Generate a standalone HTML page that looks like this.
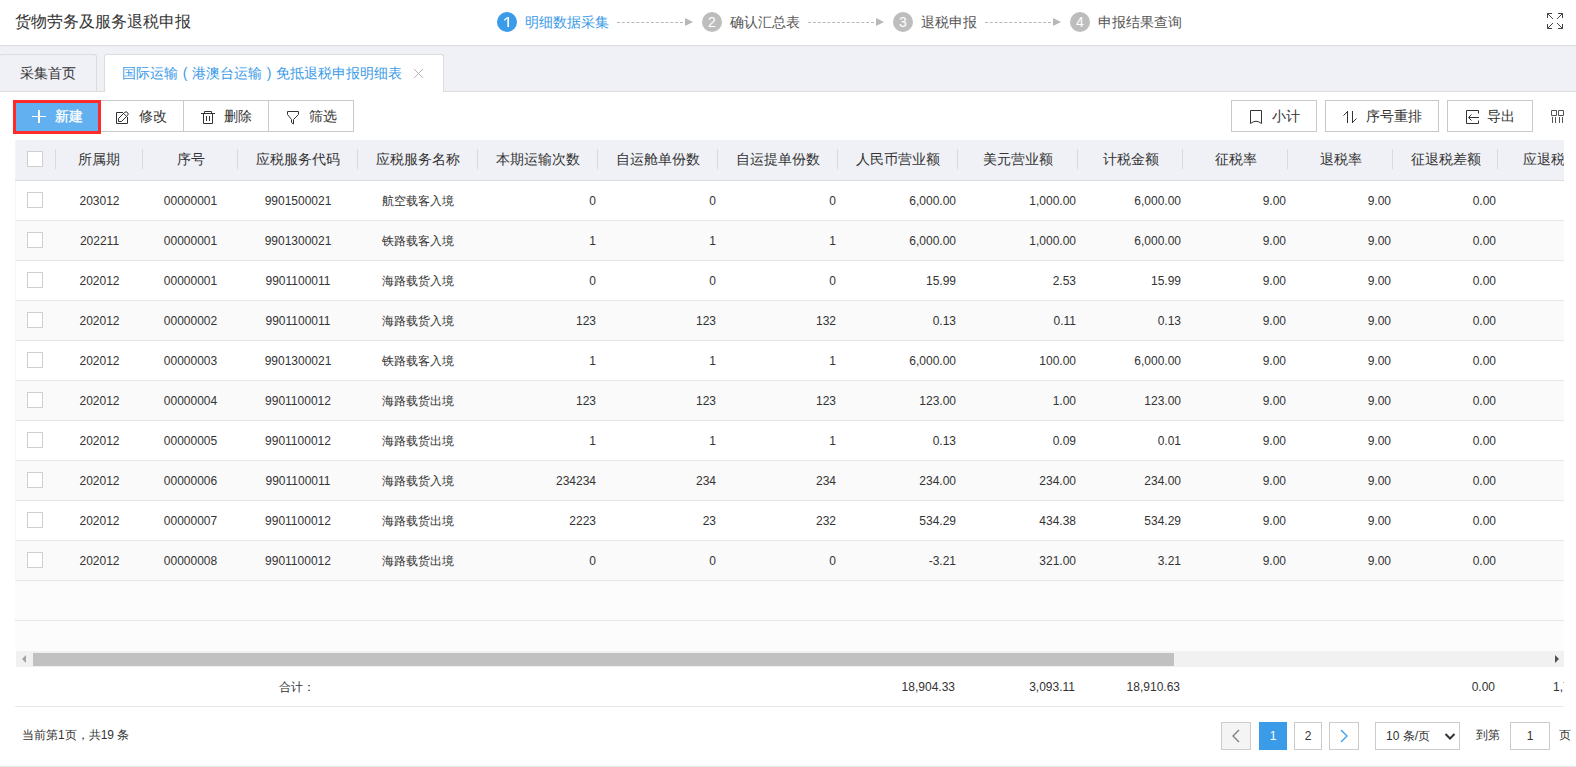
<!DOCTYPE html>
<html><head><meta charset="utf-8">
<style>
*{margin:0;padding:0;box-sizing:border-box}
html,body{width:1576px;height:767px;overflow:hidden;background:#fff}
body{position:relative;font-family:"Liberation Sans",sans-serif;color:#333;font-size:12px}
.a{position:absolute;white-space:nowrap}
.hd{left:0;top:0;width:1576px;height:46px;border-bottom:1px solid #dcdcdc;background:#fff}
.title{left:15px;top:11px;font-size:16px;line-height:22px;color:#333}
.circ{width:20px;height:20px;border-radius:50%;background:#bdbdbd;color:#fff;font-size:14px;line-height:20px;text-align:center;top:12px}
.circ.on{background:#3a9be9}
.stxt{top:12px;font-size:14px;line-height:20px;color:#555}
.stxt.on{color:#3a9be9}
.dash{top:22px;height:0;border-top:1px dashed #b8b8b8}
.arr{top:18px;width:0;height:0;border-left:8px solid #b8b8b8;border-top:4px solid transparent;border-bottom:4px solid transparent}
.tabbar{left:0;top:46px;width:1576px;height:46px;background:#f0f1f6;border-bottom:1px solid #dcdcdc}
.tab{top:54px;height:38px;border:1px solid #dcdcdc;border-bottom:none;border-radius:3px 3px 0 0;font-size:14px;line-height:36px}
.btn{top:100px;height:32px;border:1px solid #c8c8c8;background:#fff;font-size:14px;line-height:30px;color:#333}
.th{top:140px;height:41px;left:15px;width:1549px;background:#f0f1f6;border-bottom:1px solid #dcdcdc}
.sep{top:149px;width:1px;height:20px;background:#d9dadf}
.ht{top:149px;font-size:14px;line-height:20px;color:#333}
.row{left:15px;width:1549px;height:40px;border-bottom:1px solid #e6e6e6}
.cb{width:16px;height:16px;border:1px solid #cfcfcf;background:#fff}
.c{font-size:12px;line-height:20px;color:#333}
</style></head><body>

<div class="a hd"></div>
<div class="a title">货物劳务及服务退税申报</div>
<div class="a circ on" style="left:497px"></div>
<div class="a stxt on" style="left:525px">明细数据采集</div>
<div class="a dash" style="left:617px;width:66px"></div>
<div class="a arr" style="left:685px"></div>
<div class="a circ" style="left:702px">2</div>
<div class="a stxt" style="left:730px">确认汇总表</div>
<div class="a dash" style="left:808px;width:66px"></div>
<div class="a arr" style="left:876px"></div>
<div class="a circ" style="left:893px">3</div>
<div class="a stxt" style="left:921px">退税申报</div>
<div class="a dash" style="left:985px;width:66px"></div>
<div class="a arr" style="left:1053px"></div>
<div class="a circ" style="left:1070px">4</div>
<div class="a stxt" style="left:1098px">申报结果查询</div>
<div class="a tabbar"></div>
<div class="a tab" style="left:-1px;width:98px;height:37px;background:#f0f1f6;padding-left:20px;color:#333">采集首页</div>
<div class="a tab" style="left:104px;width:340px;height:38px;background:#fff;padding-left:17px;color:#3a9be9">国际运输<span style="display:inline-block;width:14px;text-align:center">(</span>港澳台运输<span style="display:inline-block;width:14px;text-align:center">)</span>免抵退税申报明细表</div>
<div class="a btn" style="left:100px;width:84px"></div>
<div class="a btn" style="left:183px;width:86px"></div>
<div class="a btn" style="left:268px;width:86px"></div>
<div class="a" style="left:13px;top:100px;width:88px;height:34px;background:#ff2a2a"></div>
<div class="a" style="left:16px;top:103px;width:82px;height:28px;background:#62b0ef"></div>
<div class="a" style="left:32px;top:115.5px;width:14px;height:1.8px;background:#fff"></div>
<div class="a" style="left:38.2px;top:110px;width:1.8px;height:13px;background:#fff"></div>
<div class="a" style="left:55px;top:106px;font-size:14px;line-height:20px;color:#fff;-webkit-text-stroke:0.3px #fff">新建</div>
<div class="a" style="left:139px;top:106px;font-size:14px;line-height:20px">修改</div>
<div class="a" style="left:224px;top:106px;font-size:14px;line-height:20px">删除</div>
<div class="a" style="left:309px;top:106px;font-size:14px;line-height:20px">筛选</div>
<div class="a btn" style="left:1231px;width:86px"></div>
<div class="a btn" style="left:1325px;width:114px"></div>
<div class="a btn" style="left:1447px;width:86px"></div>
<div class="a" style="left:1272px;top:106px;font-size:14px;line-height:20px">小计</div>
<div class="a" style="left:1366px;top:106px;font-size:14px;line-height:20px">序号重排</div>
<div class="a" style="left:1487px;top:106px;font-size:14px;line-height:20px">导出</div>
<div class="a th"></div>
<div class="a cb" style="left:27px;top:151px"></div>
<div class="a sep" style="left:55px"></div>
<div class="a sep" style="left:142px"></div>
<div class="a sep" style="left:237px"></div>
<div class="a sep" style="left:357px"></div>
<div class="a sep" style="left:477px"></div>
<div class="a sep" style="left:597px"></div>
<div class="a sep" style="left:717px"></div>
<div class="a sep" style="left:837px"></div>
<div class="a sep" style="left:957px"></div>
<div class="a sep" style="left:1077px"></div>
<div class="a sep" style="left:1182px"></div>
<div class="a sep" style="left:1287px"></div>
<div class="a sep" style="left:1392px"></div>
<div class="a sep" style="left:1497px"></div>
<div class="a ht" style="left:-101.5px;width:400px;text-align:center">所属期</div>
<div class="a ht" style="left:-9.5px;width:400px;text-align:center">序号</div>
<div class="a ht" style="left:98.0px;width:400px;text-align:center">应税服务代码</div>
<div class="a ht" style="left:218.0px;width:400px;text-align:center">应税服务名称</div>
<div class="a ht" style="left:338.0px;width:400px;text-align:center">本期运输次数</div>
<div class="a ht" style="left:458.0px;width:400px;text-align:center">自运舱单份数</div>
<div class="a ht" style="left:578.0px;width:400px;text-align:center">自运提单份数</div>
<div class="a ht" style="left:698.0px;width:400px;text-align:center">人民币营业额</div>
<div class="a ht" style="left:818.0px;width:400px;text-align:center">美元营业额</div>
<div class="a ht" style="left:930.5px;width:400px;text-align:center">计税金额</div>
<div class="a ht" style="left:1035.5px;width:400px;text-align:center">征税率</div>
<div class="a ht" style="left:1140.5px;width:400px;text-align:center">退税率</div>
<div class="a ht" style="left:1245.5px;width:400px;text-align:center">征退税差额</div>
<div class="a ht" style="left:1351.0px;width:400px;text-align:center">应退税额</div>
<div class="a row" style="top:181px;background:#fff"></div>
<div class="a cb" style="left:27px;top:192px"></div>
<div class="a c" style="left:-0.5px;width:200px;top:191px;text-align:center">203012</div>
<div class="a c" style="left:90.5px;width:200px;top:191px;text-align:center">00000001</div>
<div class="a c" style="left:198.0px;width:200px;top:191px;text-align:center">9901500021</div>
<div class="a c" style="left:318.0px;width:200px;top:191px;text-align:center">航空载客入境</div>
<div class="a c" style="left:396px;width:200px;top:191px;text-align:right">0</div>
<div class="a c" style="left:516px;width:200px;top:191px;text-align:right">0</div>
<div class="a c" style="left:636px;width:200px;top:191px;text-align:right">0</div>
<div class="a c" style="left:756px;width:200px;top:191px;text-align:right">6,000.00</div>
<div class="a c" style="left:876px;width:200px;top:191px;text-align:right">1,000.00</div>
<div class="a c" style="left:981px;width:200px;top:191px;text-align:right">6,000.00</div>
<div class="a c" style="left:1086px;width:200px;top:191px;text-align:right">9.00</div>
<div class="a c" style="left:1191px;width:200px;top:191px;text-align:right">9.00</div>
<div class="a c" style="left:1296px;width:200px;top:191px;text-align:right">0.00</div>
<div class="a row" style="top:221px;background:#fafafa"></div>
<div class="a cb" style="left:27px;top:232px"></div>
<div class="a c" style="left:-0.5px;width:200px;top:231px;text-align:center">202211</div>
<div class="a c" style="left:90.5px;width:200px;top:231px;text-align:center">00000001</div>
<div class="a c" style="left:198.0px;width:200px;top:231px;text-align:center">9901300021</div>
<div class="a c" style="left:318.0px;width:200px;top:231px;text-align:center">铁路载客入境</div>
<div class="a c" style="left:396px;width:200px;top:231px;text-align:right">1</div>
<div class="a c" style="left:516px;width:200px;top:231px;text-align:right">1</div>
<div class="a c" style="left:636px;width:200px;top:231px;text-align:right">1</div>
<div class="a c" style="left:756px;width:200px;top:231px;text-align:right">6,000.00</div>
<div class="a c" style="left:876px;width:200px;top:231px;text-align:right">1,000.00</div>
<div class="a c" style="left:981px;width:200px;top:231px;text-align:right">6,000.00</div>
<div class="a c" style="left:1086px;width:200px;top:231px;text-align:right">9.00</div>
<div class="a c" style="left:1191px;width:200px;top:231px;text-align:right">9.00</div>
<div class="a c" style="left:1296px;width:200px;top:231px;text-align:right">0.00</div>
<div class="a row" style="top:261px;background:#fff"></div>
<div class="a cb" style="left:27px;top:272px"></div>
<div class="a c" style="left:-0.5px;width:200px;top:271px;text-align:center">202012</div>
<div class="a c" style="left:90.5px;width:200px;top:271px;text-align:center">00000001</div>
<div class="a c" style="left:198.0px;width:200px;top:271px;text-align:center">9901100011</div>
<div class="a c" style="left:318.0px;width:200px;top:271px;text-align:center">海路载货入境</div>
<div class="a c" style="left:396px;width:200px;top:271px;text-align:right">0</div>
<div class="a c" style="left:516px;width:200px;top:271px;text-align:right">0</div>
<div class="a c" style="left:636px;width:200px;top:271px;text-align:right">0</div>
<div class="a c" style="left:756px;width:200px;top:271px;text-align:right">15.99</div>
<div class="a c" style="left:876px;width:200px;top:271px;text-align:right">2.53</div>
<div class="a c" style="left:981px;width:200px;top:271px;text-align:right">15.99</div>
<div class="a c" style="left:1086px;width:200px;top:271px;text-align:right">9.00</div>
<div class="a c" style="left:1191px;width:200px;top:271px;text-align:right">9.00</div>
<div class="a c" style="left:1296px;width:200px;top:271px;text-align:right">0.00</div>
<div class="a row" style="top:301px;background:#fafafa"></div>
<div class="a cb" style="left:27px;top:312px"></div>
<div class="a c" style="left:-0.5px;width:200px;top:311px;text-align:center">202012</div>
<div class="a c" style="left:90.5px;width:200px;top:311px;text-align:center">00000002</div>
<div class="a c" style="left:198.0px;width:200px;top:311px;text-align:center">9901100011</div>
<div class="a c" style="left:318.0px;width:200px;top:311px;text-align:center">海路载货入境</div>
<div class="a c" style="left:396px;width:200px;top:311px;text-align:right">123</div>
<div class="a c" style="left:516px;width:200px;top:311px;text-align:right">123</div>
<div class="a c" style="left:636px;width:200px;top:311px;text-align:right">132</div>
<div class="a c" style="left:756px;width:200px;top:311px;text-align:right">0.13</div>
<div class="a c" style="left:876px;width:200px;top:311px;text-align:right">0.11</div>
<div class="a c" style="left:981px;width:200px;top:311px;text-align:right">0.13</div>
<div class="a c" style="left:1086px;width:200px;top:311px;text-align:right">9.00</div>
<div class="a c" style="left:1191px;width:200px;top:311px;text-align:right">9.00</div>
<div class="a c" style="left:1296px;width:200px;top:311px;text-align:right">0.00</div>
<div class="a row" style="top:341px;background:#fff"></div>
<div class="a cb" style="left:27px;top:352px"></div>
<div class="a c" style="left:-0.5px;width:200px;top:351px;text-align:center">202012</div>
<div class="a c" style="left:90.5px;width:200px;top:351px;text-align:center">00000003</div>
<div class="a c" style="left:198.0px;width:200px;top:351px;text-align:center">9901300021</div>
<div class="a c" style="left:318.0px;width:200px;top:351px;text-align:center">铁路载客入境</div>
<div class="a c" style="left:396px;width:200px;top:351px;text-align:right">1</div>
<div class="a c" style="left:516px;width:200px;top:351px;text-align:right">1</div>
<div class="a c" style="left:636px;width:200px;top:351px;text-align:right">1</div>
<div class="a c" style="left:756px;width:200px;top:351px;text-align:right">6,000.00</div>
<div class="a c" style="left:876px;width:200px;top:351px;text-align:right">100.00</div>
<div class="a c" style="left:981px;width:200px;top:351px;text-align:right">6,000.00</div>
<div class="a c" style="left:1086px;width:200px;top:351px;text-align:right">9.00</div>
<div class="a c" style="left:1191px;width:200px;top:351px;text-align:right">9.00</div>
<div class="a c" style="left:1296px;width:200px;top:351px;text-align:right">0.00</div>
<div class="a row" style="top:381px;background:#fafafa"></div>
<div class="a cb" style="left:27px;top:392px"></div>
<div class="a c" style="left:-0.5px;width:200px;top:391px;text-align:center">202012</div>
<div class="a c" style="left:90.5px;width:200px;top:391px;text-align:center">00000004</div>
<div class="a c" style="left:198.0px;width:200px;top:391px;text-align:center">9901100012</div>
<div class="a c" style="left:318.0px;width:200px;top:391px;text-align:center">海路载货出境</div>
<div class="a c" style="left:396px;width:200px;top:391px;text-align:right">123</div>
<div class="a c" style="left:516px;width:200px;top:391px;text-align:right">123</div>
<div class="a c" style="left:636px;width:200px;top:391px;text-align:right">123</div>
<div class="a c" style="left:756px;width:200px;top:391px;text-align:right">123.00</div>
<div class="a c" style="left:876px;width:200px;top:391px;text-align:right">1.00</div>
<div class="a c" style="left:981px;width:200px;top:391px;text-align:right">123.00</div>
<div class="a c" style="left:1086px;width:200px;top:391px;text-align:right">9.00</div>
<div class="a c" style="left:1191px;width:200px;top:391px;text-align:right">9.00</div>
<div class="a c" style="left:1296px;width:200px;top:391px;text-align:right">0.00</div>
<div class="a row" style="top:421px;background:#fff"></div>
<div class="a cb" style="left:27px;top:432px"></div>
<div class="a c" style="left:-0.5px;width:200px;top:431px;text-align:center">202012</div>
<div class="a c" style="left:90.5px;width:200px;top:431px;text-align:center">00000005</div>
<div class="a c" style="left:198.0px;width:200px;top:431px;text-align:center">9901100012</div>
<div class="a c" style="left:318.0px;width:200px;top:431px;text-align:center">海路载货出境</div>
<div class="a c" style="left:396px;width:200px;top:431px;text-align:right">1</div>
<div class="a c" style="left:516px;width:200px;top:431px;text-align:right">1</div>
<div class="a c" style="left:636px;width:200px;top:431px;text-align:right">1</div>
<div class="a c" style="left:756px;width:200px;top:431px;text-align:right">0.13</div>
<div class="a c" style="left:876px;width:200px;top:431px;text-align:right">0.09</div>
<div class="a c" style="left:981px;width:200px;top:431px;text-align:right">0.01</div>
<div class="a c" style="left:1086px;width:200px;top:431px;text-align:right">9.00</div>
<div class="a c" style="left:1191px;width:200px;top:431px;text-align:right">9.00</div>
<div class="a c" style="left:1296px;width:200px;top:431px;text-align:right">0.00</div>
<div class="a row" style="top:461px;background:#fafafa"></div>
<div class="a cb" style="left:27px;top:472px"></div>
<div class="a c" style="left:-0.5px;width:200px;top:471px;text-align:center">202012</div>
<div class="a c" style="left:90.5px;width:200px;top:471px;text-align:center">00000006</div>
<div class="a c" style="left:198.0px;width:200px;top:471px;text-align:center">9901100011</div>
<div class="a c" style="left:318.0px;width:200px;top:471px;text-align:center">海路载货入境</div>
<div class="a c" style="left:396px;width:200px;top:471px;text-align:right">234234</div>
<div class="a c" style="left:516px;width:200px;top:471px;text-align:right">234</div>
<div class="a c" style="left:636px;width:200px;top:471px;text-align:right">234</div>
<div class="a c" style="left:756px;width:200px;top:471px;text-align:right">234.00</div>
<div class="a c" style="left:876px;width:200px;top:471px;text-align:right">234.00</div>
<div class="a c" style="left:981px;width:200px;top:471px;text-align:right">234.00</div>
<div class="a c" style="left:1086px;width:200px;top:471px;text-align:right">9.00</div>
<div class="a c" style="left:1191px;width:200px;top:471px;text-align:right">9.00</div>
<div class="a c" style="left:1296px;width:200px;top:471px;text-align:right">0.00</div>
<div class="a row" style="top:501px;background:#fff"></div>
<div class="a cb" style="left:27px;top:512px"></div>
<div class="a c" style="left:-0.5px;width:200px;top:511px;text-align:center">202012</div>
<div class="a c" style="left:90.5px;width:200px;top:511px;text-align:center">00000007</div>
<div class="a c" style="left:198.0px;width:200px;top:511px;text-align:center">9901100012</div>
<div class="a c" style="left:318.0px;width:200px;top:511px;text-align:center">海路载货出境</div>
<div class="a c" style="left:396px;width:200px;top:511px;text-align:right">2223</div>
<div class="a c" style="left:516px;width:200px;top:511px;text-align:right">23</div>
<div class="a c" style="left:636px;width:200px;top:511px;text-align:right">232</div>
<div class="a c" style="left:756px;width:200px;top:511px;text-align:right">534.29</div>
<div class="a c" style="left:876px;width:200px;top:511px;text-align:right">434.38</div>
<div class="a c" style="left:981px;width:200px;top:511px;text-align:right">534.29</div>
<div class="a c" style="left:1086px;width:200px;top:511px;text-align:right">9.00</div>
<div class="a c" style="left:1191px;width:200px;top:511px;text-align:right">9.00</div>
<div class="a c" style="left:1296px;width:200px;top:511px;text-align:right">0.00</div>
<div class="a row" style="top:541px;background:#fafafa"></div>
<div class="a cb" style="left:27px;top:552px"></div>
<div class="a c" style="left:-0.5px;width:200px;top:551px;text-align:center">202012</div>
<div class="a c" style="left:90.5px;width:200px;top:551px;text-align:center">00000008</div>
<div class="a c" style="left:198.0px;width:200px;top:551px;text-align:center">9901100012</div>
<div class="a c" style="left:318.0px;width:200px;top:551px;text-align:center">海路载货出境</div>
<div class="a c" style="left:396px;width:200px;top:551px;text-align:right">0</div>
<div class="a c" style="left:516px;width:200px;top:551px;text-align:right">0</div>
<div class="a c" style="left:636px;width:200px;top:551px;text-align:right">0</div>
<div class="a c" style="left:756px;width:200px;top:551px;text-align:right">-3.21</div>
<div class="a c" style="left:876px;width:200px;top:551px;text-align:right">321.00</div>
<div class="a c" style="left:981px;width:200px;top:551px;text-align:right">3.21</div>
<div class="a c" style="left:1086px;width:200px;top:551px;text-align:right">9.00</div>
<div class="a c" style="left:1191px;width:200px;top:551px;text-align:right">9.00</div>
<div class="a c" style="left:1296px;width:200px;top:551px;text-align:right">0.00</div>
<div class="a" style="left:15px;top:140px;width:1px;height:40px;background:#f4f5f9"></div>
<div class="a" style="left:15px;top:181px;width:1px;height:470px;background:#f6f6f6"></div>
<div class="a row" style="top:581px;background:#fcfcfc"></div>
<div class="a" style="left:15px;top:621px;width:1549px;height:30px;background:#fcfcfc"></div>
<div class="a" style="left:16px;top:651px;width:1548px;height:16px;background:#f1f1f1"></div>
<div class="a" style="left:33px;top:653px;width:1141px;height:13px;background:#c1c1c1"></div>
<div class="a" style="left:22px;top:655px;width:0;height:0;border-right:4px solid #a3a3a3;border-top:4px solid transparent;border-bottom:4px solid transparent"></div>
<div class="a" style="left:1555px;top:655px;width:0;height:0;border-left:4px solid #505050;border-top:4px solid transparent;border-bottom:4px solid transparent"></div>
<div class="a" style="left:1564px;top:136px;width:12px;height:570px;background:#fff"></div>
<div class="a" style="left:15px;top:667px;width:1549px;height:40px;border-bottom:1px solid #e8e8e8"></div>
<div class="a c" style="left:279px;top:677px">合计：</div>
<div class="a c" style="left:755px;width:200px;top:677px;text-align:right">18,904.33</div>
<div class="a c" style="left:875px;width:200px;top:677px;text-align:right">3,093.11</div>
<div class="a c" style="left:980px;width:200px;top:677px;text-align:right">18,910.63</div>
<div class="a c" style="left:1295px;width:200px;top:677px;text-align:right">0.00</div>
<div class="a" style="left:1498px;top:677px;width:66px;height:20px;overflow:hidden"><div class="a c" style="left:55px;top:0">1,700.00</div></div>
<div class="a c" style="left:22px;top:725px">当前第1页，共19 条</div>
<div class="a" style="left:1221px;top:722px;width:30px;height:28px;border:1px solid #ccc;background:#f4f4f4"></div>
<div class="a" style="left:1259px;top:722px;width:28px;height:28px;background:#3a9be9;color:#fff;text-align:center;line-height:28px;font-size:12px">1</div>
<div class="a" style="left:1294px;top:722px;width:28px;height:28px;border:1px solid #ccc;text-align:center;line-height:26px;font-size:12px">2</div>
<div class="a" style="left:1329px;top:722px;width:30px;height:28px;border:1px solid #ccc;background:#fff"></div>
<div class="a" style="left:1375px;top:722px;width:85px;height:28px;border:1px solid #ccc;background:#fff;padding-left:10px;line-height:26px;font-size:12px">10 条/页</div>
<div class="a c" style="left:1476px;top:725px">到第</div>
<div class="a" style="left:1510px;top:722px;width:40px;height:28px;border:1px solid #ccc;text-align:center;line-height:26px;font-size:12px">1</div>
<div class="a c" style="left:1559px;top:725px">页</div>
<div class="a" style="left:0;top:766px;width:1576px;height:1px;background:#e5e5e5"></div>
<svg class="a" style="left:0;top:0" width="1576" height="767" viewBox="0 0 1576 767" fill="none" stroke-width="1">
<g stroke="#444">
<path d="M1547.5 18V13.5H1552M1547.5 13.5L1553 19"/>
<path d="M1558 13.5H1562.5V18M1562.5 13.5L1557 19"/>
<path d="M1547.5 24V28.5H1552M1547.5 28.5L1553 23"/>
<path d="M1562.5 24V28.5H1558M1562.5 28.5L1557 23"/>
</g>
<path d="M414 69L423 78M423 69L414 78" stroke="#b5b5b5"/>
<path d="M508.2 17V27" stroke="#fff" stroke-width="1.7"/><path d="M504.3 20.3L507.6 17.4" stroke="#fff" stroke-width="1.3"/>
<g stroke="#333">
<path d="M123 112.5H116.5V123.5H127.5V117"/>
<path d="M118.5 118.5L124.5 112.5A2.12 2.12 0 0 1 127.5 115.5L121.5 121.5H118.5Z"/>
<path d="M123.6 113.4L126.6 116.4"/>
<path d="M204.5 113.5V111.5H211.5V113.5M201 113.5H215M203.5 113.5V123.5H212.5V113.5M206.5 116V121M209.5 116V121"/>
<path d="M287.5 111.5H298.5V114.5L293.5 119.5V124L291.5 122.5V119.5L287.5 114.5Z"/>
<path d="M1250.5 123.5V110.5H1261.5V123.5Q1256 119 1250.5 123.5Z"/>
<path d="M1347.5 111V123M1347.5 111.5L1343.5 115.5M1352.5 111V123M1352.5 122.5L1356.5 118.5"/>
<path d="M1478.5 113.5V110.5H1466.5V123.5H1478.5V120.5M1469 117.5H1479M1471.5 114.5L1468.5 117.5L1471.5 120.5"/>
</g>
<g stroke="#555">
<path d="M1551.5 110.5H1556.5V115.5H1551.5ZM1558.5 110.5H1563.5V115.5H1558.5ZM1552.5 117V123M1555.5 117V123M1559.5 117V123M1562.5 117V123"/>
</g>
<path d="M1239 730L1233 736L1239 742" stroke="#7a7a7a" stroke-width="1.3"/>
<path d="M1341 730L1347 736L1341 742" stroke="#3a9be9" stroke-width="1.3"/>
<path d="M1445.5 734L1450 738.5L1454.5 734" stroke="#333" stroke-width="2"/>
</svg>
</body></html>
